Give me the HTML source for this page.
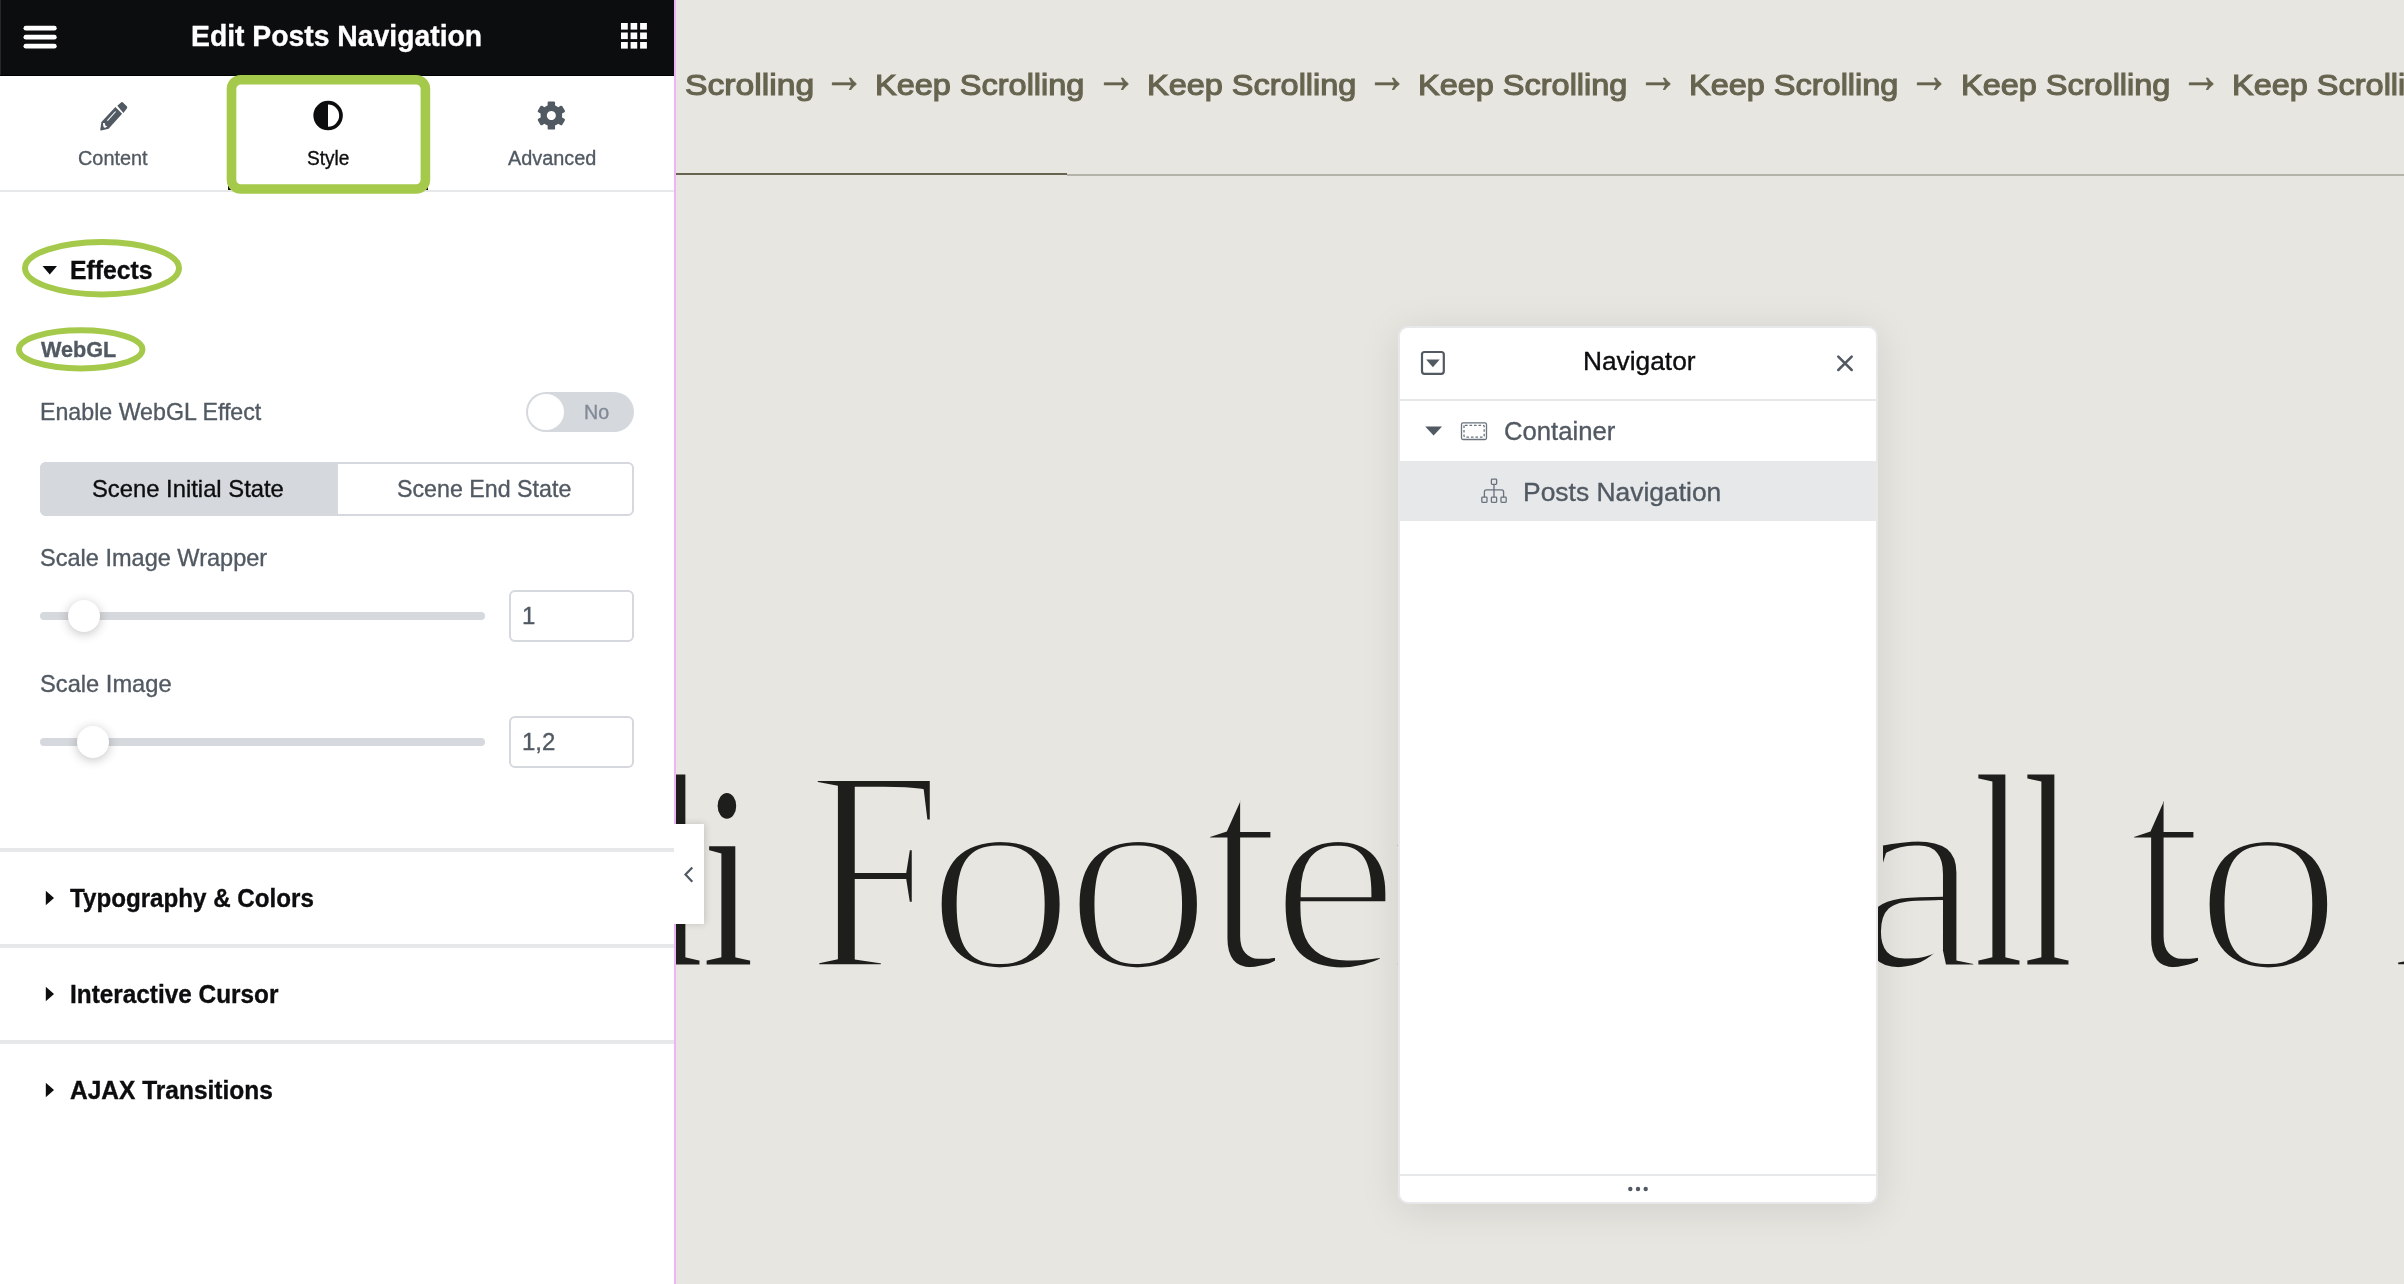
<!DOCTYPE html>
<html lang="en">
<head>
<meta charset="utf-8">
<title>Edit Posts Navigation</title>
<style>
html,body{margin:0;padding:0}
body{width:2404px;height:1284px;overflow:hidden;position:relative;background:#e8e6e1;font-family:"Liberation Sans",sans-serif}
.a{position:absolute}
.t{position:absolute;white-space:nowrap;transform-origin:0 0;-webkit-text-stroke:0.35px currentColor}
.big{position:absolute;left:0;white-space:nowrap;color:#1e1e1c}
.big .f2{filter:url(#thin2)}
.big .w{display:inline}
.big .g{display:inline-block;transform-origin:0 231px;white-space:nowrap;-webkit-text-stroke:6px #e8e6e1}
#panel{left:0;top:0;width:674px;height:1284px;background:#fff}
#hdr{left:0;top:0;width:674px;height:76px;background:#0c0d0e}
.div{left:0;width:674px;height:4px;background:#e6e8ea}
.inp{box-sizing:border-box;border:2px solid #d5d8dc;border-radius:6px;background:#fff}
.track{height:8px;border-radius:4px;background:#d5d8dc}
.knob{width:32px;height:32px;border-radius:50%;background:#fff;box-shadow:0 2px 11px rgba(0,0,0,.24)}
#nav{left:1398px;top:326px;width:480px;height:878px;box-sizing:border-box;border:2px solid #e6e8ea;border-radius:10px;background:#fff;box-shadow:0 6px 40px rgba(0,0,0,.10)}
</style>
</head>
<body>
<div id="root" style="position:absolute;left:0;top:0;width:2404px;height:1284px;overflow:hidden;will-change:transform">
<!-- preview area -->
<div class="a" style="left:676px;top:172.5px;width:391px;height:2.2px;background:#66644f"></div>
<div class="a" style="left:1067px;top:174px;width:1337px;height:1.6px;background:#b4b3a9"></div>
<svg class="a" width="0" height="0" style="left:0;top:0"><defs><filter id="thin2" filterUnits="userSpaceOnUse" x="-150" y="-60" width="600" height="420" color-interpolation-filters="sRGB"><feMorphology operator="dilate" radius="2 0"/></filter></defs></svg>
<div class="big" style="top:733.00px;font:400 276px/276px 'Liberation Serif', serif"><span class="w"><span class="g" style="margin-left:653.98px;width:48.38px;transform:translateY(1.71px) scale(0.6500,1.0047);-webkit-text-stroke-width:2.4px">l</span><span class="g" style="margin-left:0.00px;width:48.15px;transform:translateY(1.45px) scale(0.6836,0.9489);-webkit-text-stroke-width:2px">i</span></span> <span class="w"><span class="g" style="margin-left:-11.27px;width:116.17px;transform:translateY(3.77px) scale(0.8684,1.0527);-webkit-text-stroke-width:6.6px">F</span><span class="g f2" style="margin-left:0.00px;width:137.19px;transform:translateY(4.30px) scale(1.1108,0.9996);-webkit-text-stroke-width:7.2px">o</span><span class="g f2" style="margin-left:0.00px;width:140.86px;transform:translateY(4.30px) scale(1.1052,0.9996);-webkit-text-stroke-width:7.2px">o</span><span class="g f2" style="margin-left:0.00px;width:65.39px;transform:translateY(3.75px) scale(1.0441,1.0990);-webkit-text-stroke-width:6.4px">t</span><span class="g f2" style="margin-left:0.00px;width:121.41px;transform:translateY(4.20px) scale(1.0905,0.9973);-webkit-text-stroke-width:7px">e</span><span class="g" style="margin-left:0.00px;width:88.75px;transform:translateY(3.26px) scale(1.0262,0.9859)">r</span></span> <span class="w"><span class="g" style="margin-left:-3.54px;width:308.89px;transform:translateY(3.72px) scale(1.1548,1.0555)">C</span><span class="g f2" style="margin-left:0.00px;width:121.73px;transform:translateY(3.50px) scale(1.0644,0.9968)">a</span><span class="g" style="margin-left:0.00px;width:48.55px;transform:translateY(1.71px) scale(0.6500,1.0047);-webkit-text-stroke-width:2.4px">l</span><span class="g" style="margin-left:0.00px;width:45.47px;transform:translateY(1.71px) scale(0.6500,1.0047);-webkit-text-stroke-width:2.4px">l</span></span> <span class="w"><span class="g f2" style="margin-left:-11.23px;width:66.49px;transform:translateY(3.75px) scale(1.0295,1.0990);-webkit-text-stroke-width:6.4px">t</span><span class="g f2" style="margin-left:0.00px;width:134.94px;transform:translateY(4.30px) scale(1.1071,0.9996);-webkit-text-stroke-width:7.2px">o</span></span> <span class="w"><span class="g" style="margin-left:-3.08px;width:172.92px;transform:translateY(3.44px) scale(0.9099,1.0460)">A</span><span class="g" style="margin-left:0.00px;width:115.70px;transform:translateY(3.70px) scale(1.0256,0.9902)">c</span><span class="g f2" style="margin-left:0.00px;width:80.52px;transform:translateY(3.75px) scale(1.0328,1.0990);-webkit-text-stroke-width:6.4px">t</span><span class="g" style="margin-left:0.00px;width:31.81px;transform:translateY(1.45px) scale(0.5343,0.9489);-webkit-text-stroke-width:2px">i</span><span class="g f2" style="margin-left:0.00px;width:141.22px;transform:translateY(4.30px) scale(1.1061,0.9996);-webkit-text-stroke-width:7.2px">o</span><span class="g" style="margin-left:0.00px;width:134.60px;transform:translateY(3.26px) scale(1.0289,0.9859)">n</span></span></div>
<!-- navigator -->
<div class="a" id="nav"></div>
<div class="a" style="left:1400px;top:399px;width:476px;height:2px;background:#e6e8ea"></div>
<div class="a" style="left:1400px;top:461px;width:476px;height:60px;background:#e6e8ea"></div>
<div class="a" style="left:1400px;top:1174px;width:476px;height:2px;background:#e6e8ea"></div>
<!-- editor panel -->
<div class="a" id="panel"></div>
<div class="a" id="hdr"></div>
<div class="a" style="left:0;top:0;width:1px;height:76px;background:#27282a"></div>
<div class="a" style="left:0;top:75px;width:674px;height:1px;background:#000"></div>
<div class="a" style="left:0;top:190px;width:674px;height:2px;background:#e6e8ea"></div>
<div class="a" style="left:228px;top:186px;width:200px;height:4px;background:#0c0d0e"></div>
<div class="a" style="left:674px;top:0;width:2px;height:1284px;background:#edb4fa"></div>
<!-- collapse handle -->
<div class="a" style="left:674px;top:810px;width:50px;height:128px;overflow:hidden"><div class="a" style="left:0;top:14px;width:30px;height:99.6px;background:#fff;box-shadow:1px 0 7px rgba(0,0,0,.16)"></div></div>
<!-- toggle -->
<div class="a" style="left:526px;top:392px;width:108px;height:40px;border-radius:20px;background:#d5d8dc"></div>
<div class="a" style="left:528px;top:394px;width:36px;height:36px;border-radius:50%;background:#fff"></div>
<!-- tab switcher -->
<div class="a inp" style="left:40px;top:462px;width:594px;height:54px"></div>
<div class="a" style="left:40px;top:462px;width:298px;height:54px;border-radius:6px 0 0 6px;background:#d5d8dc"></div>
<!-- sliders -->
<div class="a track" style="left:40px;top:612px;width:445px"></div>
<div class="a knob" style="left:68px;top:600px"></div>
<div class="a inp" style="left:509px;top:590px;width:125px;height:52px"></div>
<div class="a track" style="left:40px;top:738px;width:445px"></div>
<div class="a knob" style="left:77px;top:726px"></div>
<div class="a inp" style="left:509px;top:716px;width:125px;height:52px"></div>
<!-- section dividers -->
<div class="a div" style="top:848px"></div>
<div class="a div" style="top:944px"></div>
<div class="a div" style="top:1040px"></div>
<div class="t " style="left:191.11px;top:21.00px;font:700 30px/30px 'Liberation Sans', sans-serif;color:#ffffff;transform:scaleX(0.9441);">Edit Posts Navigation</div>
<div class="t " style="left:78.01px;top:148.00px;font:400 20px/20px 'Liberation Sans', sans-serif;color:#515962;transform:scaleX(0.9929);">Content</div>
<div class="t " style="left:306.70px;top:148.00px;font:400 20px/20px 'Liberation Sans', sans-serif;color:#0c0d0e;transform:scaleX(0.9540);">Style</div>
<div class="t " style="left:507.50px;top:148.00px;font:400 20px/20px 'Liberation Sans', sans-serif;color:#515962;transform:scaleX(0.9928);">Advanced</div>
<div class="t " style="left:70.31px;top:257.70px;font:700 25px/25px 'Liberation Sans', sans-serif;color:#0c0d0e;transform:scaleX(0.9907);">Effects</div>
<div class="t " style="left:40.50px;top:339.10px;font:700 22.5px/22.5px 'Liberation Sans', sans-serif;color:#515962;transform:scaleX(0.9607);">WebGL</div>
<div class="t " style="left:40.03px;top:400.00px;font:400 24px/24px 'Liberation Sans', sans-serif;color:#515962;transform:scaleX(0.9662);">Enable WebGL Effect</div>
<div class="t " style="left:584.02px;top:402.00px;font:400 20px/20px 'Liberation Sans', sans-serif;color:#818a96;transform:scaleX(0.9819);">No</div>
<div class="t " style="left:92.31px;top:476.80px;font:400 24px/24px 'Liberation Sans', sans-serif;color:#0c0d0e;transform:scaleX(0.9916);">Scene Initial State</div>
<div class="t " style="left:397.33px;top:477.00px;font:400 24px/24px 'Liberation Sans', sans-serif;color:#515962;transform:scaleX(0.9677);">Scene End State</div>
<div class="t " style="left:39.52px;top:545.80px;font:400 24px/24px 'Liberation Sans', sans-serif;color:#515962;transform:scaleX(0.9806);">Scale Image Wrapper</div>
<div class="t " style="left:522.00px;top:603.70px;font:400 24px/24px 'Liberation Sans', sans-serif;color:#515962;">1</div>
<div class="t " style="left:39.51px;top:672.00px;font:400 24px/24px 'Liberation Sans', sans-serif;color:#515962;transform:scaleX(0.9867);">Scale Image</div>
<div class="t " style="left:522.00px;top:729.70px;font:400 24px/24px 'Liberation Sans', sans-serif;color:#515962;">1,2</div>
<div class="t " style="left:70.30px;top:885.70px;font:700 25px/25px 'Liberation Sans', sans-serif;color:#0c0d0e;transform:scaleX(0.9665);">Typography &amp; Colors</div>
<div class="t " style="left:70.33px;top:981.80px;font:700 25px/25px 'Liberation Sans', sans-serif;color:#0c0d0e;transform:scaleX(0.9740);">Interactive Cursor</div>
<div class="t " style="left:70.00px;top:1078.00px;font:700 25px/25px 'Liberation Sans', sans-serif;color:#0c0d0e;transform:scaleX(0.9802);">AJAX Transitions</div>
<div class="t " style="left:1582.74px;top:349.10px;font:400 25.5px/25.5px 'Liberation Sans', sans-serif;color:#0c0d0e;transform:scaleX(1.0312);">Navigator</div>
<div class="t " style="left:1503.99px;top:419.20px;font:400 25.5px/25.5px 'Liberation Sans', sans-serif;color:#515962;transform:scaleX(1.0066);">Container</div>
<div class="t " style="left:1522.93px;top:479.80px;font:400 25.5px/25.5px 'Liberation Sans', sans-serif;color:#515962;transform:scaleX(1.0363);">Posts Navigation</div>
<div class="t " style="left:685.08px;top:70.40px;font:400 30px/30px 'Liberation Sans', sans-serif;color:#66644f;transform:scaleX(1.1222);-webkit-text-stroke:1.15px #66644f;">Scrolling</div>
<div class="t arr" style="left:824.20px;top:50.10px;font:400 50px/50px 'Liberation Sans', sans-serif;color:#66644f;transform:scaleX(0.8100);-webkit-text-stroke:0.7px #66644f;">→</div>
<div class="t " style="left:875.44px;top:70.40px;font:400 30px/30px 'Liberation Sans', sans-serif;color:#66644f;transform:scaleX(1.0824);-webkit-text-stroke:1.15px #66644f;">Keep Scrolling</div>
<div class="t arr" style="left:1095.50px;top:50.10px;font:400 50px/50px 'Liberation Sans', sans-serif;color:#66644f;transform:scaleX(0.8100);-webkit-text-stroke:0.7px #66644f;">→</div>
<div class="t " style="left:1146.74px;top:70.40px;font:400 30px/30px 'Liberation Sans', sans-serif;color:#66644f;transform:scaleX(1.0824);-webkit-text-stroke:1.15px #66644f;">Keep Scrolling</div>
<div class="t arr" style="left:1366.80px;top:50.10px;font:400 50px/50px 'Liberation Sans', sans-serif;color:#66644f;transform:scaleX(0.8100);-webkit-text-stroke:0.7px #66644f;">→</div>
<div class="t " style="left:1418.04px;top:70.40px;font:400 30px/30px 'Liberation Sans', sans-serif;color:#66644f;transform:scaleX(1.0824);-webkit-text-stroke:1.15px #66644f;">Keep Scrolling</div>
<div class="t arr" style="left:1638.10px;top:50.10px;font:400 50px/50px 'Liberation Sans', sans-serif;color:#66644f;transform:scaleX(0.8100);-webkit-text-stroke:0.7px #66644f;">→</div>
<div class="t " style="left:1689.34px;top:70.40px;font:400 30px/30px 'Liberation Sans', sans-serif;color:#66644f;transform:scaleX(1.0824);-webkit-text-stroke:1.15px #66644f;">Keep Scrolling</div>
<div class="t arr" style="left:1909.40px;top:50.10px;font:400 50px/50px 'Liberation Sans', sans-serif;color:#66644f;transform:scaleX(0.8100);-webkit-text-stroke:0.7px #66644f;">→</div>
<div class="t " style="left:1960.64px;top:70.40px;font:400 30px/30px 'Liberation Sans', sans-serif;color:#66644f;transform:scaleX(1.0824);-webkit-text-stroke:1.15px #66644f;">Keep Scrolling</div>
<div class="t arr" style="left:2180.70px;top:50.10px;font:400 50px/50px 'Liberation Sans', sans-serif;color:#66644f;transform:scaleX(0.8100);-webkit-text-stroke:0.7px #66644f;">→</div>
<div class="t " style="left:2231.94px;top:70.40px;font:400 30px/30px 'Liberation Sans', sans-serif;color:#66644f;transform:scaleX(1.0824);-webkit-text-stroke:1.15px #66644f;">Keep Scrolling</div>
<svg class="a" style="left:0;top:0" width="2404" height="1284" viewBox="0 0 2404 1284">
<!-- hamburger -->
<g fill="#fff">
<rect x="23.5" y="25.8" width="33.2" height="4.8" rx="2.4"/>
<rect x="23.5" y="34.8" width="33.2" height="4.8" rx="2.4"/>
<rect x="23.5" y="43.8" width="33.2" height="4.8" rx="2.4"/>
</g>
<!-- apps grid -->
<g fill="#fff">
<rect x="621" y="23" width="6.8" height="6.6"/><rect x="630.6" y="23" width="6.6" height="6.6"/><rect x="640.1" y="23" width="6.8" height="6.6"/>
<rect x="621" y="32.5" width="6.8" height="6.6"/><rect x="630.6" y="32.5" width="6.6" height="6.6"/><rect x="640.1" y="32.5" width="6.8" height="6.6"/>
<rect x="621" y="42" width="6.8" height="6.6"/><rect x="630.6" y="42" width="6.6" height="6.6"/><rect x="640.1" y="42" width="6.8" height="6.6"/>
</g>
<!-- pencil (content tab) -->
<g fill="#515962">
<path d="M121.3 102.2 Q122.3 101.7 123.2 102.7 L126.8 106.3 Q127.8 107.4 126.8 108.5 L123.4 112.9 L117.3 105.8 Z"/>
<path d="M115.4 107.1 L122.1 113.8 L108.6 128.8 L101.2 130.4 Q100.1 130.6 100.3 129.5 L101.4 121.9 Z"/>
</g>
<path d="M115.6 111.5 L107.4 120.7" stroke="#fff" stroke-width="1.1" fill="none"/>
<path d="M103 123.1 L104.9 123.3 L105.3 125.4 L107.3 126.6 L105.3 127.8 L103.9 127.4 L103.2 125.8 Z" fill="#fff"/>
<!-- style tab icon -->
<circle cx="328.1" cy="115.6" r="12.9" fill="none" stroke="#0c0d0e" stroke-width="3.7"/>
<path d="M328 102.7 A12.9 12.9 0 0 0 328 128.5 Z" fill="#0c0d0e"/>
<!-- gear (advanced tab) -->
<g fill="#515962">
<path fill-rule="evenodd" d="M551.35 104.7 a10.8 10.8 0 1 0 0.01 0 Z M551.35 111 a4.5 4.5 0 1 1 -0.01 0 Z"/>
<g id="teeth">
<rect x="547.65" y="101.4" width="7.4" height="7" rx="1.2"/>
<rect x="547.65" y="101.4" width="7.4" height="7" rx="1.2" transform="rotate(60 551.35 115.5)"/>
<rect x="547.65" y="101.4" width="7.4" height="7" rx="1.2" transform="rotate(120 551.35 115.5)"/>
<rect x="547.65" y="101.4" width="7.4" height="7" rx="1.2" transform="rotate(180 551.35 115.5)"/>
<rect x="547.65" y="101.4" width="7.4" height="7" rx="1.2" transform="rotate(240 551.35 115.5)"/>
<rect x="547.65" y="101.4" width="7.4" height="7" rx="1.2" transform="rotate(300 551.35 115.5)"/>
</g>
</g>
<!-- green annotations -->
<rect x="231.5" y="79.7" width="193.9" height="109.3" rx="9.3" fill="none" stroke="#a5c94b" stroke-width="9.6"/>
<ellipse cx="102" cy="268.2" rx="77" ry="26.2" fill="none" stroke="#a5c94b" stroke-width="6"/>
<ellipse cx="80.7" cy="349.4" rx="61.7" ry="19.1" fill="none" stroke="#a5c94b" stroke-width="6"/>
<!-- section arrows -->
<path d="M42.5 266 L57 266 L49.75 274.4 Z" fill="#0c0d0e"/>
<path d="M45.8 890.8 L54 898 L45.8 905.3 Z" fill="#0c0d0e"/>
<path d="M45.8 986.8 L54 994 L45.8 1001.3 Z" fill="#0c0d0e"/>
<path d="M45.8 1082.8 L54 1090 L45.8 1097.3 Z" fill="#0c0d0e"/>
<!-- collapse chevron -->
<path d="M692.3 867.5 L685.5 874.6 L692.3 881.7" fill="none" stroke="#515962" stroke-width="2.2"/>
<!-- navigator: dock icon -->
<rect x="1422" y="352" width="21.8" height="21.8" rx="2.5" fill="none" stroke="#515962" stroke-width="2.2"/>
<path d="M1426.1 359.6 L1439.7 359.6 L1432.9 367.2 Z" fill="#515962"/>
<!-- navigator: close -->
<path d="M1838.3 356.6 L1851.7 370 M1851.7 356.6 L1838.3 370" fill="none" stroke="#515962" stroke-width="2.5" stroke-linecap="round"/>
<!-- navigator: container row -->
<path d="M1425.2 426.5 L1442 426.5 L1433.6 435.6 Z" fill="#515962"/>
<rect x="1461.5" y="422.9" width="25" height="16.6" rx="1.5" fill="none" stroke="#69727d" stroke-width="1.3"/>
<rect x="1464" y="425.3" width="20.2" height="11.8" rx="1" fill="none" stroke="#69727d" stroke-width="1.3" stroke-dasharray="2.6 1.9"/>
<!-- navigator: posts navigation icon -->
<g fill="none" stroke="#69727d" stroke-width="1.3">
<rect x="1491.4" y="479.2" width="5.2" height="5.2" rx="0.8"/>
<rect x="1481.8" y="497.2" width="5.2" height="5.2" rx="0.8"/>
<rect x="1491.4" y="497.2" width="5.2" height="5.2" rx="0.8"/>
<rect x="1501" y="497.2" width="5.2" height="5.2" rx="0.8"/>
<path d="M1494 484.4 L1494 497.2 M1484.4 497.2 L1484.4 491.9 Q1484.4 489.9 1486.4 489.9 L1501.6 489.9 Q1503.6 489.9 1503.6 491.9 L1503.6 497.2"/>
</g>
<!-- navigator: footer dots -->
<g fill="#515962"><circle cx="1630.3" cy="1189" r="2.2"/><circle cx="1638" cy="1189" r="2.2"/><circle cx="1645.7" cy="1189" r="2.2"/></g>
</svg>

</div>
</body>
</html>
